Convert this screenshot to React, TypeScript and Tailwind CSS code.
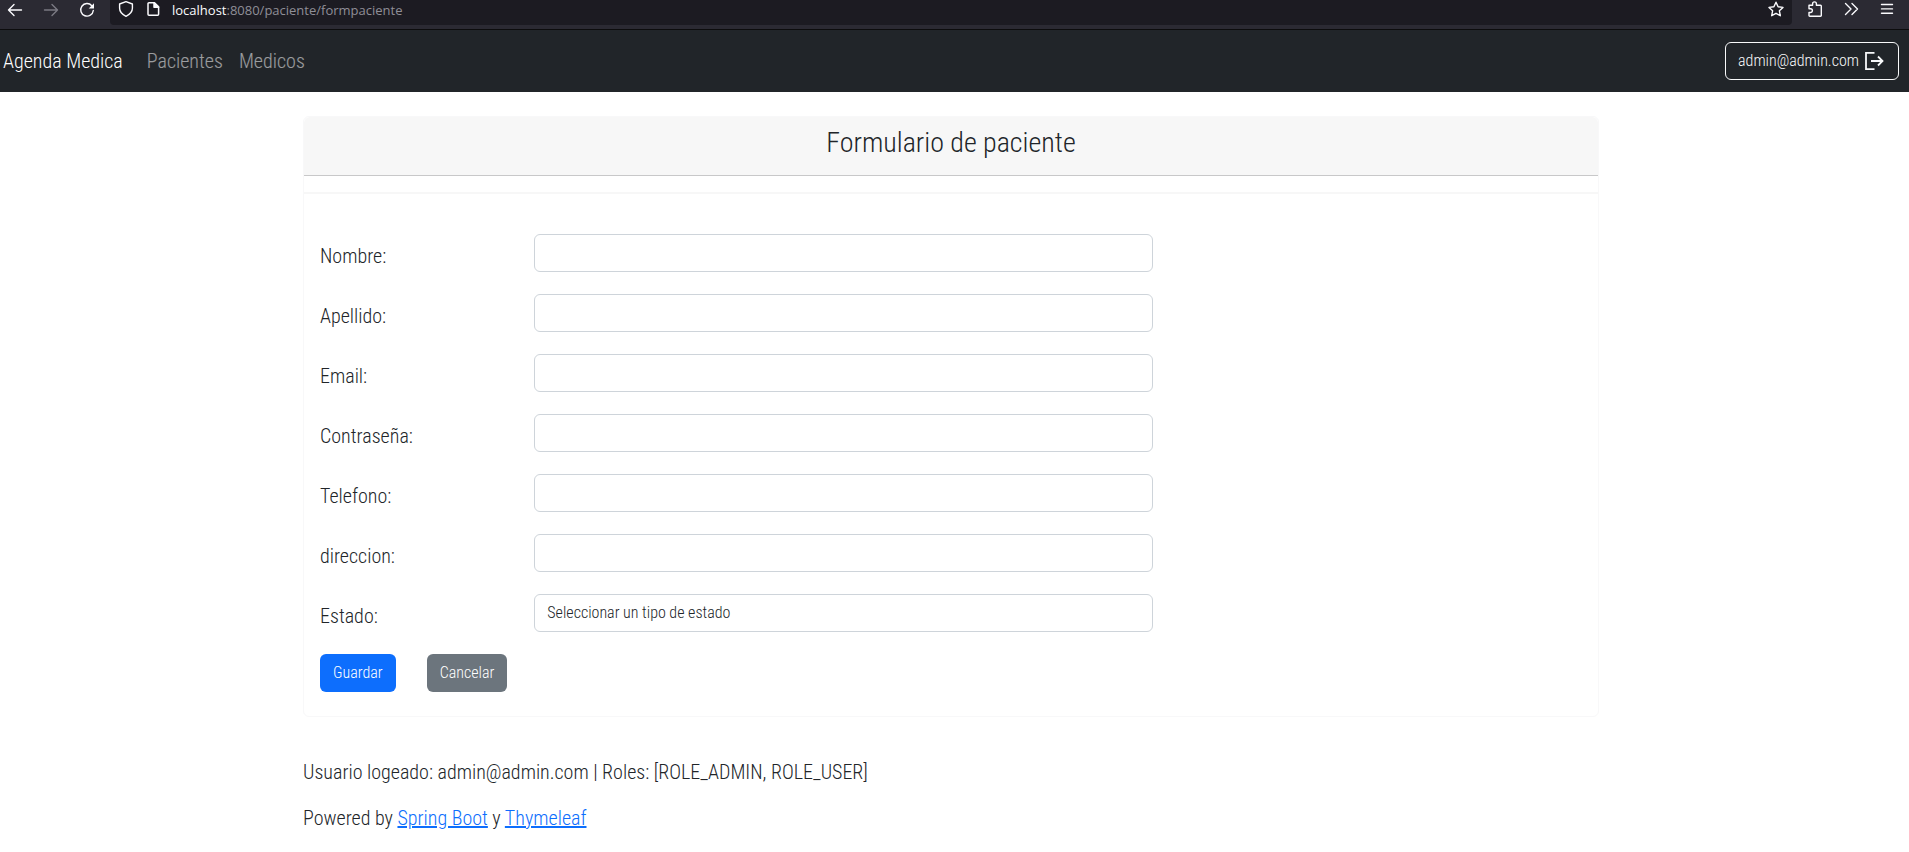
import { useState } from "react";

const FIELDS = [
  { id: "nombre", label: "Nombre:", type: "text" },
  { id: "apellido", label: "Apellido:", type: "text" },
  { id: "email", label: "Email:", type: "email" },
  { id: "password", label: "Contraseña:", type: "password" },
  { id: "telefono", label: "Telefono:", type: "tel" },
  { id: "direccion", label: "direccion:", type: "text" },
];

const ROW = "grid grid-cols-6 gap-x-6";
const CONTROL =
  "block h-[38px] w-full appearance-none rounded-md border border-[#ced4da] bg-white px-3 text-base font-light text-[#212529]";

function BarIcon({ d, className = "" }: { d: string; className?: string }) {
  return (
    <svg
      width="16"
      height="18"
      viewBox="0 0 16 18"
      fill="none"
      stroke="currentColor"
      strokeWidth="1.4"
      strokeLinecap="round"
      strokeLinejoin="round"
      className={className}
      aria-hidden="true"
    >
      <path d={d} />
    </svg>
  );
}

function BrowserBar() {
  return (
    <header className="flex h-[30px] items-start border-b border-[#0c0c0d] bg-[#2b2a33] text-[#fbfbfe]">
      <div className="flex w-[110px] shrink-0 gap-5 pl-[7px]">
        <button type="button" aria-label="Back">
          <BarIcon d="M14.500 10H1.500M7 4.500 1.500 10 7 15.500" />
        </button>
        <button type="button" aria-label="Forward" className="text-[#7b7a83]">
          <BarIcon d="M1.500 10H14.500M9 4.500 14.500 10 9 15.500" />
        </button>
        <button type="button" aria-label="Reload">
          <svg width="16" height="18" viewBox="0 0 16 18" fill="none" stroke="currentColor" strokeWidth="1.4" strokeLinecap="round">
            <path d="M12.800 5.700A6.300 6.300 0 1 0 14.300 10.500" />
            <path d="M15 3.200v5.300H9.700z" fill="currentColor" stroke="none" />
          </svg>
        </button>
      </div>
      <div className="flex h-[25px] flex-1 items-start rounded-b bg-[#1c1b22] pr-2 pl-2">
        <BarIcon className="mr-3" d="M8 1.700 14.400 4v4.300c0 3.500-2.600 6.200-6.400 8-3.800-1.800-6.400-4.500-6.400-8V4z" />
        <svg width="14" height="18" viewBox="0 0 14 18" fill="none" stroke="currentColor" strokeWidth="1.5" strokeLinejoin="round" className="mr-3" aria-hidden="true">
          <path d="M8.500 2.700H3a1 1 0 0 0-1 1v10.600a1 1 0 0 0 1 1h8.600a1 1 0 0 0 1-1V6.700z" />
          <path d="M8 2.700v4.500h4.600z" fill="currentColor" />
        </svg>
        <span className="flex-1 font-['Open_Sans',sans-serif] text-[13px] leading-5 font-normal text-[#8f8e97]">
          <span className="text-[#fbfbfe]">localhost</span>:8080/paciente/formpaciente
        </span>
        <button type="button" aria-label="Bookmark">
          <BarIcon d="m8 2.200 2.100 4.600 4.900.6-3.600 3.400.9 4.900L8 13.300l-4.300 2.400.9-4.900L1 7.400l4.900-.6z" />
        </button>
      </div>
      <div className="flex w-[117px] justify-between pr-[14px] pl-[15px]">
        <button type="button" aria-label="Extensions">
          <BarIcon d="M2 5.200h3.600V3.800a1.900 1.900 0 0 1 3.800 0v1.400H13.500a.8.8 0 0 1 .8.800v9.500a.8.8 0 0 1-.8.800H2.800a.8.8 0 0 1-.8-.800v-3h1.500a1.900 1.900 0 0 0 0-3.800H2z" />
        </button>
        <button type="button" aria-label="More tools">
          <BarIcon d="M2.500 3.500 8 9l-5.500 5.500M9 3.500 14.500 9 9 14.500" />
        </button>
        <button type="button" aria-label="Menu">
          <BarIcon d="M2.500 4.500h11M2.500 8.900h11M2.500 13.300h11" />
        </button>
      </div>
    </header>
  );
}

export default function App() {
  const [values, setValues] = useState<Record<string, string>>({});

  return (
    <div className="bg-white font-['Roboto_Condensed',Roboto,sans-serif] text-xl leading-[30px] font-light text-[#212529]">
      <BrowserBar />
      <nav className="flex h-[62px] items-center bg-[#212529] pr-[10px] pl-[3px]">
        <a href="#inicio" className="mr-6 text-white">Agenda Medica</a>
        <div className="flex flex-1 gap-4 text-white/55">
          <a href="#pacientes">Pacientes</a>
          <a href="#medicos">Medicos</a>
        </div>
        <button type="button" className="flex h-[38px] items-center gap-[3px] rounded-md border border-[#f8f9fa] px-3 text-base text-[#f8f9fa]">
          admin@admin.com
          <svg width="24" height="24" viewBox="0 0 24 24" fill="none" stroke="currentColor" strokeWidth="1.800" aria-hidden="true">
            <path d="M12.500 3.900H4v16.200h8.500M9 12h11M16 7.500l4.500 4.500-4.500 4.500" />
          </svg>
        </button>
      </nav>

      <main className="pr-[7px]">
        <div className="mx-auto max-w-[1296px] pt-6">
          <section className="rounded-md border border-[#f8f8f9] pb-6">
            <h1 className="h-[59px] rounded-t-md border-b border-[#c8c8c9] bg-[#f7f7f7] pt-2 text-center text-[28px] leading-9">
              Formulario de paciente
            </h1>
            <hr className="my-4 border-t-2 border-[#f7f7f7]" />
            <form className="px-4 pt-6" onSubmit={(e) => e.preventDefault()}>
              {FIELDS.map((f) => (
                <div key={f.id} className={ROW}>
                  <label htmlFor={f.id} className="mb-4 py-[7px]">{f.label}</label>
                  <div className="col-span-3">
                    <input
                      id={f.id}
                      type={f.type}
                      value={values[f.id] ?? ""}
                      onChange={(e) => setValues({ ...values, [f.id]: e.target.value })}
                      className={CONTROL}
                    />
                  </div>
                </div>
              ))}
              <div className={ROW}>
                <label htmlFor="estado" className="mb-4 py-[7px]">Estado:</label>
                <div className="col-span-3">
                  <select id="estado" className={CONTROL}>
                    <option>Seleccionar un tipo de estado</option>
                  </select>
                </div>
              </div>
              <div className="flex gap-[31px] text-base text-white">
                <button type="submit" className="h-[38px] rounded-md bg-[#0d6efd] px-[13px]">Guardar</button>
                <button type="button" className="h-[38px] rounded-md bg-[#6c757d] px-[13px]">Cancelar</button>
              </div>
            </form>
          </section>
          <footer className="flex flex-col gap-4 pt-10 pb-4">
            <p>Usuario logeado: admin@admin.com | Roles: [ROLE_ADMIN, ROLE_USER]</p>
            <p>
              Powered by <a href="#spring" className="text-[#0d6efd] underline">Spring Boot</a> y{" "}
              <a href="#thymeleaf" className="text-[#0d6efd] underline">Thymeleaf</a>
            </p>
          </footer>
        </div>
      </main>
    </div>
  );
}
